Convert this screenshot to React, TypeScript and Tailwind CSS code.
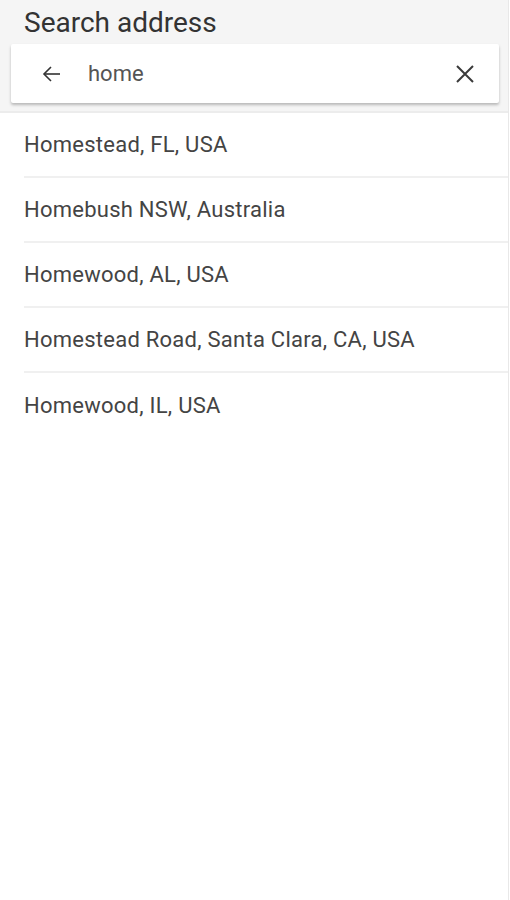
import React from 'react';

const RESULTS = [
  'Homestead, FL, USA',
  'Homebush NSW, Australia',
  'Homewood, AL, USA',
  'Homestead Road, Santa Clara, CA, USA',
  'Homewood, IL, USA',
];

const BackIcon = () => (
  <svg width="24" height="24" viewBox="0 0 24 24" fill="none" stroke="#333333" strokeWidth="1.6">
    <path d="M20 12H4.5" />
    <path d="M11 5l-7 7 7 7" />
  </svg>
);

const CloseIcon = () => (
  <svg width="24" height="24" viewBox="0 0 24 24" fill="none" stroke="#3a3a3a" strokeWidth="2">
    <path d="M4 4l16 16M20 4L4 20" />
  </svg>
);

export default function App() {
  return (
    <div
      className="w-[509px] min-h-[900px] bg-white border-r border-[#e8e8e8]"
      style={{ fontFamily: 'Roboto, "Liberation Sans", sans-serif' }}
    >
      <div className="bg-[#f5f5f5] pt-[6px] pb-[8px] border-b-2 border-[#ececec]">
        <h1 className="pl-6 text-[28px] leading-[34px] text-[#333333]">Search address</h1>
        <div className="ml-[11px] mr-[9px] mt-[4px] h-[59px] bg-white rounded-[2px] shadow-[0_2px_3px_rgba(0,0,0,0.25)] flex items-center">
          <span className="ml-[29px] flex items-center">
            <BackIcon />
          </span>
          <span className="ml-[24px] text-[22px] text-[#555555] flex-1">home</span>
          <span className="mr-[22px] flex items-center">
            <CloseIcon />
          </span>
        </div>
      </div>
      <ul>
        {RESULTS.map((r, i) => (
          <li key={r} className="pl-6">
            <div
              className={`h-[65px] flex items-center text-[22px] tracking-[0.25px] text-[#444444] ${
                i < RESULTS.length - 1 ? 'border-b-2 border-[#f0f0f0]' : ''
              }`}
            >
              {r}
            </div>
          </li>
        ))}
      </ul>
    </div>
  );
}
